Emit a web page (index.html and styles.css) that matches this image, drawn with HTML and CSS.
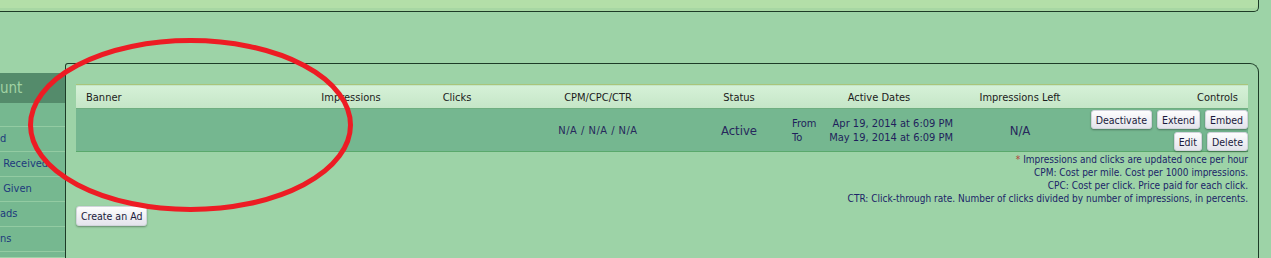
FILE: index.html
```html
<!DOCTYPE html>
<html lang="en">

<head>
  <meta charset="UTF-8">
  <title>My Ads</title>
  <link rel="stylesheet" href="styles.css">
</head>

<body>

  <div class="topbox"></div>

  <div class="layout">
    <aside class="sidebar">
      <div class="side-head">unt</div>
      <ul class="side-menu">
        <li></li>
        <li>d</li>
        <li>&nbsp;Received</li>
        <li>&nbsp;Given</li>
        <li>ads</li>
        <li>ns</li>
        <li></li>
      </ul>
    </aside>

    <main class="panel">
      <table class="ads">
        <colgroup>
          <col class="c-banner">
          <col class="c-imp">
          <col class="c-clicks">
          <col class="c-cpm">
          <col class="c-status">
          <col class="c-dates">
          <col class="c-left">
          <col class="c-controls">
        </colgroup>
        <thead>
          <tr>
            <th class="t-banner">Banner</th>
            <th>Impressions</th>
            <th>Clicks</th>
            <th>CPM/CPC/CTR</th>
            <th>Status</th>
            <th class="t-dates">Active Dates</th>
            <th>Impressions Left</th>
            <th class="t-controls">Controls</th>
          </tr>
        </thead>
        <tbody>
          <tr>
            <td></td>
            <td></td>
            <td></td>
            <td class="rates">N/A / N/A / N/A</td>
            <td class="status">Active</td>
            <td class="dates">
              <div class="date-grid">
                <span>From</span><span class="date">Apr 19, 2014 at 6:09 PM</span>
                <span>To</span><span class="date">May 19, 2014 at 6:09 PM</span>
              </div>
            </td>
            <td class="left">N/A</td>
            <td class="controls">
              <div class="btn-row">
                <button class="btn">Deactivate</button>
                <button class="btn">Extend</button>
                <button class="btn">Embed</button>
              </div>
              <div class="btn-row">
                <button class="btn">Edit</button>
                <button class="btn">Delete</button>
              </div>
            </td>
          </tr>
        </tbody>
      </table>

      <div class="notes">
        <p><span class="star">*</span> Impressions and clicks are updated once per hour</p>
        <p>CPM: Cost per mile. Cost per 1000 impressions.</p>
        <p>CPC: Cost per click. Price paid for each click.</p>
        <p>CTR: Click-through rate. Number of clicks divided by number of impressions, in percents.</p>
      </div>

      <button class="btn btn-create">Create an Ad</button>
    </main>
  </div>

  <svg class="mark" width="1271" height="258" viewBox="0 0 1271 258">
    <ellipse cx="190.5" cy="125" rx="160" ry="84.5" fill="none" stroke="#ed1c24" stroke-width="5"/>
  </svg>

</body>

</html>
```

FILE: styles.css
```css
* {
  box-sizing: border-box;
}

body {
  margin: 0;
  font-family: "DejaVu Sans Condensed", "DejaVu Sans", sans-serif;
  font-size: 11px;
  background-color: #9dd3a7;
  overflow: hidden;
  height: 258px;
}

/* TOP BOX */

.topbox {
  width: 1259px;
  height: 12px;
  background-color: #b3dfa8;
  border-right: 1px solid #1d3b27;
  border-bottom: 1px solid #1d3b27;
  border-bottom-right-radius: 5px;
  box-shadow: inset 0 -3px 0 #a7d7a3;
}

/* LAYOUT */

.layout {
  display: flex;
  margin-top: 51px;
}

/* SIDEBAR */

.sidebar {
  width: 65px;
  flex: none;
  margin-top: 10px;
}

.side-head {
  height: 30px;
  padding-top: 5px;
  background-color: #548b6b;
  color: #a1d2a3;
  font-size: 15px;
  line-height: 20px;
}

.side-menu {
  list-style: none;
  margin: 0;
  padding: 0;
}

.side-menu li {
  height: 25px;
  line-height: 24px;
  background-color: #76b890;
  border-bottom: 1px solid #93cba2;
  color: #1d3a7c;
  font-size: 11px;
  white-space: nowrap;
  overflow: hidden;
}

.side-menu li:first-child {
  height: 24px;
}

.side-menu li:last-child {
  height: 5px;
  border-bottom: 0 none;
}

/* PANEL */

.panel {
  width: 1194px;
  height: 195px;
  padding: 20px 10px 0 10px;
  border-top: 1px solid #1d3b27;
  border-left: 1px solid #1d3b27;
  border-right: 1px solid #1d3b27;
  border-top-left-radius: 3px;
  border-top-right-radius: 9px;
}

/* TABLE */

.ads {
  width: 1172px;
  table-layout: fixed;
  border-collapse: collapse;
}

.c-banner { width: 214px; }
.c-imp { width: 122px; }
.c-clicks { width: 90px; }
.c-cpm { width: 192px; }
.c-status { width: 90px; }
.c-dates { width: 186px; }
.c-left { width: 100px; }
.c-controls { width: 178px; }

.ads thead tr {
  background: linear-gradient(#d5f1d7, #c5e6c7);
  border-top: 1px solid #a9c57b;
  border-bottom: 1px solid #6fae80;
}

.ads th {
  height: 24px;
  padding: 1px 0 0 0;
  font-weight: normal;
  color: #1b1b1b;
  text-align: center;
  white-space: nowrap;
}

.ads th.t-banner {
  text-align: left;
  padding-left: 10px;
}

.ads th.t-dates {
  padding-left: 4px;
}

.ads th.t-controls {
  text-align: right;
  padding-right: 10px;
}

.ads tbody tr {
  background-color: #75b790;
  border-bottom: 1px solid #5aa86c;
}

.ads td {
  height: 42px;
  padding: 1px 0 0 0;
  color: #27285c;
  text-align: center;
  vertical-align: middle;
  white-space: nowrap;
}

.ads td.rates {
  letter-spacing: .5px;
}

.ads td.status,
.ads td.left {
  font-size: 13px;
}

.ads td.dates {
  text-align: left;
  padding-left: 8px;
}

.date-grid {
  display: grid;
  grid-template-columns: 34px 127px;
  line-height: 14px;
  color: #1f1f5c;
}

.date-grid .date {
  text-align: right;
}

.ads td.controls {
  text-align: right;
  vertical-align: top;
  padding-top: 1px;
}

.btn-row {
  display: flex;
  justify-content: flex-end;
  gap: 5px;
}

.btn-row + .btn-row {
  margin-top: 3px;
}

/* BUTTONS */

.btn {
  height: 19px;
  padding: 0 4px;
  font-family: inherit;
  font-size: 10.5px;
  color: #1a1a3c;
  background: linear-gradient(#fdfdfd, #e4e4ec);
  border: 1px solid #d2d4dc;
  border-radius: 3px;
  box-shadow: 0 1px 2px rgba(0, 0, 0, .35);
  cursor: pointer;
}

.btn-create {
  height: 20px;
}

/* NOTES */

.notes {
  text-align: right;
  font-size: 10px;
  line-height: 13px;
  color: #1b2468;
  padding-top: 1px;
  margin-bottom: 1px;
}

.notes p {
  margin: 0;
}

.notes .star {
  color: #b23a3a;
}

/* ANNOTATION */

.mark {
  position: absolute;
  top: 0;
  left: 0;
  pointer-events: none;
}
```
